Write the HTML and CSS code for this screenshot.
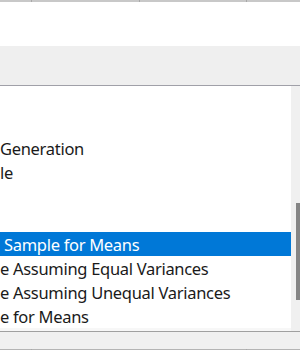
FILE: index.html
```html
<!DOCTYPE html>
<html lang="en">
<head>
  <meta charset="UTF-8">
  <meta name="viewport" content="width=device-width, initial-scale=1.0">
  <title>Data Analysis</title>
  <link rel="stylesheet" href="styles.css">
</head>
<body>
  <div class="edge">
    <div class="cell first"></div>
    <div class="cell mid"></div>
    <div class="cell mid2"></div>
    <div class="cell"></div>
  </div>

  <div class="blank"></div>
  <div class="band"></div>

  <div class="listbox">
    <ul class="tools">
      <li></li>
      <li></li>
      <li>Generation</li>
      <li>le</li>
      <li></li>
      <li></li>
      <li class="selected">&nbsp;Sample for Means</li>
      <li>e Assuming Equal Variances</li>
      <li>e Assuming Unequal Variances</li>
      <li>e for Means</li>
    </ul>
    <div class="scroll">
      <div class="thumb"></div>
    </div>
  </div>

  <div class="footer"></div>
  <div class="edge bottom">
    <div class="cell first"></div>
    <div class="cell wide"></div>
    <div class="cell"></div>
  </div>
</body>
</html>
```

FILE: styles.css
```css
body {
  margin: 0;
  width: 300px;
  height: 350px;
  overflow: hidden;
  background: #fff;
  font-family: "Noto Sans", "Open Sans", sans-serif;
}
.edge {
  display: flex;
  height: 2px;
  background: #c8c8c8;
}
.cell {
  flex: 1;
}
.cell.first {
  flex: 0 0 31px;
  border-right: 1px solid #a8a8a8;
}
.cell.mid {
  flex: 0 0 107px;
  border-right: 1px solid #a8a8a8;
}
.cell.mid2 {
  flex: 0 0 106px;
  border-right: 1px solid #a8a8a8;
}
.cell.wide {
  flex: 0 0 214px;
  border-right: 1px solid #a8a8a8;
}
.bottom {
  background: #b4b4b4;
}
.blank {
  height: 44px;
}
.band {
  height: 39px;
  background: #efefef;
}
.listbox {
  display: flex;
  height: 245px;
  border-top: 1px solid #a0a0a8;
  border-bottom: 1px solid #a0a0a0;
  background: #f7f7f7;
}
.tools {
  flex: 1;
  list-style: none;
  margin: 0;
  padding: 2px 0 0;
  height: 240px;
  overflow: hidden;
  background: #fff;
}
.tools li {
  height: 24px;
  line-height: 25px;
  font-size: 16.5px;
  letter-spacing: -0.3px;
  color: #1a1a1a;
  white-space: nowrap;
}
.tools li.selected {
  background: #0078d7;
  color: #fff;
}
.scroll {
  flex: 0 0 9px;
  background: #f0f0f0;
  position: relative;
}
.thumb {
  position: absolute;
  top: 117px;
  right: 0;
  width: 4px;
  height: 97px;
  background: #858585;
}
.footer {
  height: 17px;
  background: #f0f0f0;
}
```
